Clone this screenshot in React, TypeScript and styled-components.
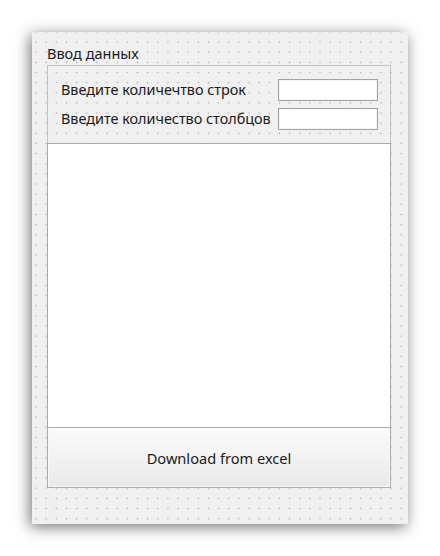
import React from "react";
import styled, { createGlobalStyle } from "styled-components";

const Global = createGlobalStyle`
  html, body { margin: 0; padding: 0; background: #ffffff; }
  body { font-family: "Noto Sans", "Open Sans", sans-serif; color: #1b1b1b; }
`;

const Page = styled.div`
  width: 440px;
  height: 556px;
  padding: 32px 0 0 32px;
  box-sizing: border-box;
`;

const Window = styled.div`
  width: 376px;
  height: 492px;
  box-sizing: border-box;
  background-color: #f0f0f0;
  background-image: radial-gradient(circle, #b8b8b8 0 0.8px, transparent 1px);
  background-size: 10.15px 10.15px;
  background-position: -1px 5px;
  box-shadow: -2px 3px 14px rgba(0, 0, 0, 0.55);
  padding: 11px 17px 0 15px;
  display: flex;
  flex-direction: column;
`;

const Title = styled.div`
  font-size: 14.5px;
  line-height: 20px;
  height: 20px;
`;

const GroupBox = styled.div`
  margin-top: 2px;
  height: 423px;
  box-sizing: border-box;
  border: 1px solid #c2c2c2;
  display: flex;
  flex-direction: column;
`;

const Fields = styled.div`
  display: grid;
  grid-template-columns: 1fr 100px;
  row-gap: 7px;
  padding: 13px 12px 13px 13px;
  align-items: center;
`;

const Label = styled.span`
  font-size: 14.4px;
  line-height: 22px;
  white-space: nowrap;
`;

const Input = styled.div`
  height: 22px;
  box-sizing: border-box;
  background: #ffffff;
  border: 1px solid #a2a2a2;
  box-shadow: inset 0 0 0 1px #f4f4f4;
`;

const Table = styled.div`
  flex: 1;
  margin: 0 -1px;
  background: #ffffff;
  border: 1px solid #a9a9a9;
  border-bottom: none;
`;

const Button = styled.div`
  height: 61px;
  margin: 0 -1px -1px;
  box-sizing: border-box;
  border: 1px solid #adadad;
  background: linear-gradient(#fbfbfb, #e9e9e9);
  box-shadow: inset 0 0 0 1px #f8f8f8;
  display: flex;
  align-items: center;
  justify-content: center;
  font-size: 14.6px;
`;

export default function App() {
  return (
    <>
      <Global />
      <Page>
        <Window>
          <Title>Ввод данных</Title>
          <GroupBox>
            <Fields>
              <Label>Введите количечтво строк</Label>
              <Input />
              <Label>Введите количество столбцов</Label>
              <Input />
            </Fields>
            <Table />
            <Button>Download from excel</Button>
          </GroupBox>
        </Window>
      </Page>
    </>
  );
}
